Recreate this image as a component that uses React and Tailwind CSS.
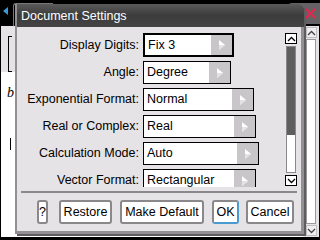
import React from "react";

const rows = [
  { label: "Display Digits:", value: "Fix 3", w: "w-[91px]", focus: true },
  { label: "Angle:", value: "Degree", w: "w-[88px]" },
  { label: "Exponential Format:", value: "Normal", w: "w-[111px]" },
  { label: "Real or Complex:", value: "Real", w: "w-[113px]" },
  { label: "Calculation Mode:", value: "Auto", w: "w-[116px]" },
  { label: "Vector Format:", value: "Rectangular", w: "w-[113px]" },
];

const Arrow = () => (
  <svg width="8" height="12" viewBox="0 0 8 12">
    <polygon points="1,1 7,6 1,11" fill="#ffffff" />
    <polygon points="1,6 7,6 1,11" fill="#e4e2e4" />
  </svg>
);

const Chevron = ({ down }) => (
  <svg width="9" height="6" viewBox="0 0 9 6">
    <polyline
      points={down ? "1,1 4.5,4.5 8,1" : "1,5 4.5,1.5 8,5"}
      fill="none"
      stroke="#000"
      strokeWidth="1.3"
    />
  </svg>
);

const Dropdown = ({ value, w, focus }) => (
  <div
    className={`${w} h-[23px] shrink-0 flex bg-white border-black ${
      focus ? "border-[2.5px] h-[24px]" : "border-[1.5px]"
    }`}
  >
    <span className="flex-1 pl-[3px] text-[12.5px] leading-[20px] text-black">
      {value}
    </span>
    <span className="w-[21px] bg-[#c9c6c9] flex items-center justify-center">
      <Arrow />
    </span>
  </div>
);

const Button = ({ children, className = "" }) => (
  <div
    className={`h-[24px] flex items-center justify-center bg-white border-2 border-[#8a888a] rounded-[3px] text-[12.5px] text-black ${className}`}
  >
    {children}
  </div>
);

export default function App() {
  return (
    <div className="relative w-[320px] h-[240px] bg-black overflow-hidden font-['Liberation_Sans',sans-serif]">
      {/* background top bar */}
      <div className="h-[26px] relative">
        <svg className="absolute left-[3px] top-[7px]" width="5" height="8" viewBox="0 0 5 8">
          <polygon points="5,0 0,4 5,8" fill="#3a9ad8" />
        </svg>
        <div className="absolute left-[13px] top-[3px] w-[40px] h-[23px] border-l border-t border-[#777] rounded-tl-[3px]" />
        <div className="absolute left-[288px] top-[3px] w-[32px] h-[21px] bg-[#646264] rounded-tl-[4px] flex items-center justify-end pr-[4px]">
          <svg width="11" height="11" viewBox="0 0 11 11">
            <path d="M1 1 L10 10 M10 1 L1 10" stroke="#e8244a" strokeWidth="2" />
          </svg>
        </div>
      </div>

      {/* background page */}
      <div className="h-[212px] bg-white border-l border-r border-b border-black flex">
        <div className="flex-1 flex flex-col">
          <div className="h-[46px] bg-[#e6e3e6] pl-[7px] pt-[10px]">
            <div className="w-[4px] h-[36px] border-l-[1.5px] border-t border-b-[1.5px] border-black" />
          </div>
          <div className="pl-[6px] pt-[14px] text-[14px] italic font-['Liberation_Serif',serif] text-black leading-none">
            b
          </div>
          <div className="ml-[9px] mt-[38px] w-[1px] h-[12px] bg-black" />
        </div>
        <div className="w-[16px] bg-[#e6e3e6] flex flex-col items-center pt-[1px] pb-[1px]">
          <div className="w-[11px] h-[11px] bg-[#f4f4f4] border border-[#b0aeb0] flex items-center justify-center opacity-70">
            <Chevron />
          </div>
          <div className="mt-[1px] w-[10px] flex-1 bg-white border border-[#9a989a]" />
          <div className="mt-[1px] w-[11px] h-[11px] bg-[#f4f4f4] border border-[#b0aeb0] flex items-center justify-center opacity-70">
            <Chevron down />
          </div>
        </div>
      </div>

      {/* dialog */}
      <div className="absolute left-[15px] top-[4px] w-[289px] h-[230px] bg-[#939093] rounded-tr-[5px] shadow-[2px_2px_0_0_#5e5c5e] flex flex-col pl-[2px] pr-[3px] pb-[3px]">
        <div className="h-[23px] -ml-[2px] -mr-[3px] rounded-tr-[5px] bg-gradient-to-b from-[#5a5a5a] via-[#3c3c3c] to-[#444] pl-[4px] text-white text-[12.5px] leading-[25px] border-l-2 border-[#939093]">
          Document Settings
        </div>
        <div className="flex-1 bg-[#e6e3e6] flex flex-col">
          <div className="h-[160px] overflow-hidden flex">
            <div className="flex-1 pt-[6px] flex flex-col gap-[4px]">
              {rows.map((r) => (
                <div key={r.label} className="flex items-center gap-[4px]">
                  <span className="w-[122px] text-right text-[12.5px] text-black whitespace-nowrap">
                    {r.label}
                  </span>
                  <Dropdown value={r.value} w={r.w} focus={r.focus} />
                </div>
              ))}
            </div>
            <div className="w-[12px] mr-[4px] pt-[6px] flex flex-col">
              <div className="h-[11px] bg-white border border-black flex items-center justify-center">
                <Chevron />
              </div>
              <div className="mt-[2px] mx-[1px] h-[127px] bg-white border border-[#8a888a] flex flex-col">
                <div className="h-[88px] bg-[#5f5e5f]" />
              </div>
              <div className="mt-[2px] h-[11px] bg-white border border-black flex items-center justify-center">
                <Chevron down />
              </div>
            </div>
          </div>
          <div className="mt-[4px] ml-[4px] mr-[4px] h-[2px] bg-[#8a888a]" />
          <div className="mt-[7px] flex pl-[20px]">
            <Button className="w-[11px]">?</Button>
            <Button className="w-[53px] ml-[11px]">Restore</Button>
            <Button className="w-[84px] ml-[8px]">Make Default</Button>
            <Button className="w-[27px] ml-[8px] border-r-[#4a9ad0] border-b-[#4a9ad0]">OK</Button>
            <Button className="w-[48px] ml-[7px]">Cancel</Button>
          </div>
        </div>
      </div>
    </div>
  );
}
